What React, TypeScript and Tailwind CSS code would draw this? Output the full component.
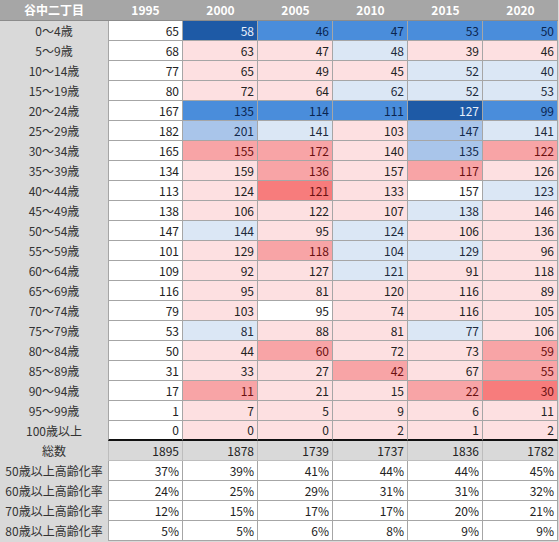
import React from "react";

type Tone = "W" | "P1" | "P3" | "P4" | "B1" | "B2" | "B3" | "B4";

const tones: Record<Tone, string> = {
  W: "bg-white text-[#222]",
  P1: "bg-[#fde0e1] text-[#222]",
  P3: "bg-[#f8a4a6] text-[#6b1010]",
  P4: "bg-[#f77c7c] text-[#6b1010]",
  B1: "bg-[#dbe7f5] text-[#1d2a3c]",
  B2: "bg-[#a9c5ea] text-[#13294b]",
  B3: "bg-[#4a8ddb] text-[#0a2550]",
  B4: "bg-[#1e5aa6] text-[#e8f0fb]",
};

const years = ["1995", "2000", "2005", "2010", "2015", "2020"];

// [label, 1995, then [value, tone] for 2000..2020]
const rows: [string, number, [number, Tone][]][] = [
  ["0～4歳", 65, [[58, "B4"], [46, "B3"], [47, "B3"], [53, "B3"], [50, "B3"]]],
  ["5～9歳", 68, [[63, "P1"], [47, "P1"], [48, "B1"], [39, "P1"], [46, "P1"]]],
  ["10～14歳", 77, [[65, "P1"], [49, "P1"], [45, "P1"], [52, "B1"], [40, "B1"]]],
  ["15～19歳", 80, [[72, "P1"], [64, "P1"], [62, "B1"], [52, "B1"], [53, "B1"]]],
  ["20～24歳", 167, [[135, "B3"], [114, "B3"], [111, "B3"], [127, "B4"], [99, "B3"]]],
  ["25～29歳", 182, [[201, "B2"], [141, "B1"], [103, "P1"], [147, "B2"], [141, "B1"]]],
  ["30～34歳", 165, [[155, "P3"], [172, "P3"], [140, "P1"], [135, "B2"], [122, "P3"]]],
  ["35～39歳", 134, [[159, "P1"], [136, "P3"], [157, "P1"], [117, "P3"], [126, "P1"]]],
  ["40～44歳", 113, [[124, "P1"], [121, "P4"], [133, "P1"], [157, "W"], [123, "B1"]]],
  ["45～49歳", 138, [[106, "P1"], [122, "P1"], [107, "P1"], [138, "B1"], [146, "P1"]]],
  ["50～54歳", 147, [[144, "B1"], [95, "P1"], [124, "B1"], [106, "P1"], [136, "P1"]]],
  ["55～59歳", 101, [[129, "P1"], [118, "P3"], [104, "B1"], [129, "B1"], [96, "P1"]]],
  ["60～64歳", 109, [[92, "P1"], [127, "P1"], [121, "B1"], [91, "P1"], [118, "P1"]]],
  ["65～69歳", 116, [[95, "P1"], [81, "P1"], [120, "P1"], [116, "P1"], [89, "P1"]]],
  ["70～74歳", 79, [[103, "P1"], [95, "W"], [74, "P1"], [116, "P1"], [105, "P1"]]],
  ["75～79歳", 53, [[81, "B1"], [88, "P1"], [81, "P1"], [77, "B1"], [106, "P1"]]],
  ["80～84歳", 50, [[44, "P1"], [60, "P3"], [72, "P1"], [73, "P1"], [59, "P3"]]],
  ["85～89歳", 31, [[33, "P1"], [27, "P1"], [42, "P3"], [67, "P1"], [55, "P3"]]],
  ["90～94歳", 17, [[11, "P3"], [21, "P1"], [15, "P1"], [22, "P3"], [30, "P4"]]],
  ["95～99歳", 1, [[7, "P1"], [5, "P1"], [9, "P1"], [6, "P1"], [11, "P1"]]],
  ["100歳以上", 0, [[0, "P1"], [0, "P1"], [2, "P1"], [1, "P1"], [2, "P1"]]],
];

const totals = [1895, 1878, 1739, 1737, 1836, 1782];

const rates: [string, string[]][] = [
  ["50歳以上高齢化率", ["37%", "39%", "41%", "44%", "44%", "45%"]],
  ["60歳以上高齢化率", ["24%", "25%", "29%", "31%", "31%", "32%"]],
  ["70歳以上高齢化率", ["12%", "15%", "17%", "17%", "20%", "21%"]],
  ["80歳以上高齢化率", ["5%", "5%", "6%", "8%", "9%", "9%"]],
];

const labelCls =
  "h-[20px] bg-[#d9d9d9] text-[#333] flex items-center justify-center whitespace-nowrap";
const cellCls =
  "h-[20px] flex items-center justify-end pr-[3px] border-r border-b border-[#a6a6a6]";

export default function App() {
  return (
    <div
      className="w-[559px] h-[542px] bg-[#d9d9d9] text-[12px] leading-none"
      style={{ fontFamily: '"Noto Sans CJK JP", "Noto Sans", sans-serif' }}
    >
      <div className="grid grid-cols-[108px_repeat(6,75px)]">
        {/* header */}
        <div className="h-[21px] bg-[#a6a6a6] text-white font-bold flex items-center justify-center border-b border-[#8c8c8c]">
          谷中二丁目
        </div>
        {years.map(y => (
          <div
            key={y}
            className="h-[21px] bg-[#a6a6a6] text-white font-bold flex items-center justify-center border-b border-[#8c8c8c]"
          >
            {y}
          </div>
        ))}

        {/* age rows */}
        {rows.map(([label, base, vals], i) => {
          const last = i === rows.length - 1;
          const bottom = last ? "border-b-2 border-b-[#111]" : "";
          return (
            <React.Fragment key={label}>
              <div className={labelCls}>{label}</div>
              <div className={`${cellCls} ${tones.W} border-l ${bottom}`}>{base}</div>
              {vals.map(([v, t], j) => (
                <div key={j} className={`${cellCls} ${tones[t]} ${bottom}`}>
                  {v}
                </div>
              ))}
            </React.Fragment>
          );
        })}

        {/* totals */}
        <div className={labelCls}>総数</div>
        {totals.map((v, j) => (
          <div
            key={j}
            className={`${cellCls} bg-[#d9d9d9] text-[#222] border-[#bdbdbd] ${j === 0 ? "border-l" : ""}`}
          >
            {v}
          </div>
        ))}

        {/* rates */}
        {rates.map(([label, vals]) => (
          <React.Fragment key={label}>
            <div className={labelCls}>{label}</div>
            {vals.map((v, j) => (
              <div
                key={j}
                className={`${cellCls} bg-white text-[#222] ${j === 0 ? "border-l" : ""}`}
              >
                {v}
              </div>
            ))}
          </React.Fragment>
        ))}
      </div>
    </div>
  );
}
